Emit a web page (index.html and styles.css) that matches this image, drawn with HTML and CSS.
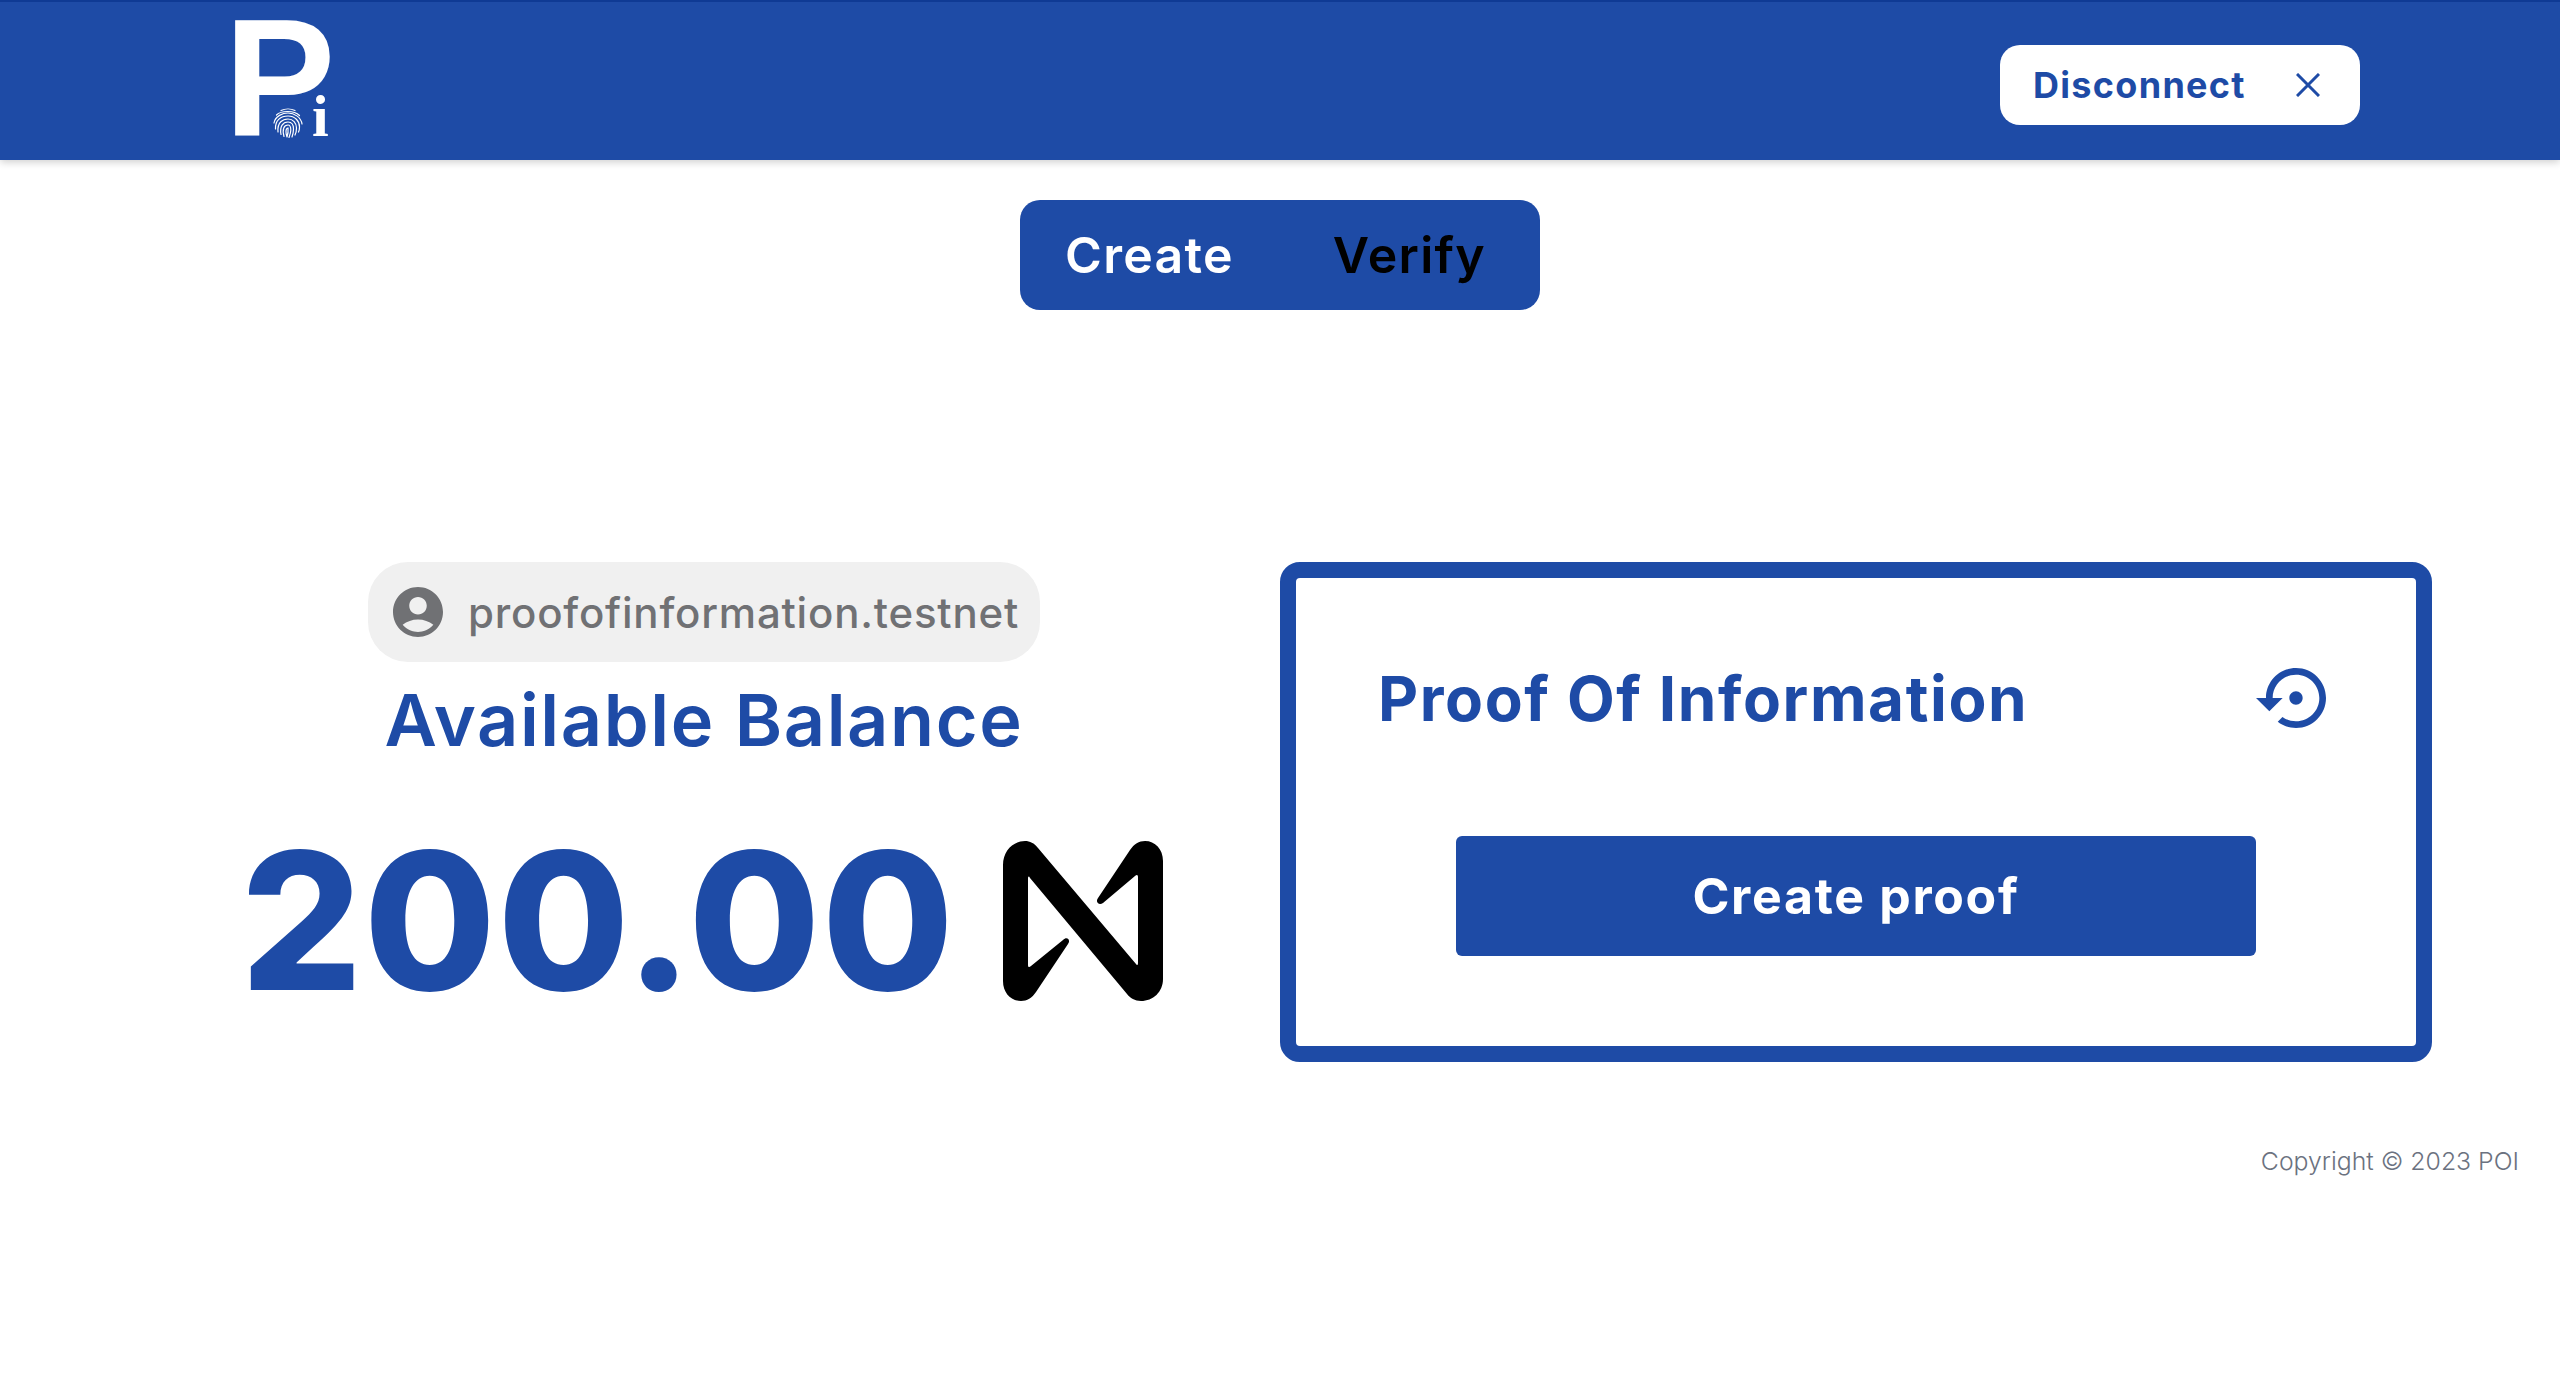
FILE: index.html
```html
<!DOCTYPE html>
<html lang="en">
<head>
    <meta charset="UTF-8">
    <title>Proof Of Information</title>
    <link rel="stylesheet" href="styles.css">
</head>
<body>
    <header class="topbar">
        <svg class="logo" viewBox="-12 0 116 140">
            <text class="logo-p" x="-10" y="126">P</text>
            <text class="logo-i" x="78" y="126">i</text>
            <g transform="translate(39 98)" fill="none" stroke="#fff" stroke-width="1.2" stroke-linecap="round">
                <path d="M8 2.500C12 .5 18 .5 22 2.500"/>
                <path d="M3.500 7C8 2.500 21 2 26.500 7.500"/>
                <path d="M1 15C2 8 10 5 15 5C21 5 28 9 29 16"/>
                <path d="M2.500 21C2 12 8 8 15 8C22 8 26.500 13 26.500 19C26.500 21 26 23 25.500 24"/>
                <path d="M5 24C4 14 10 11 15 11C20 11 23.500 15 23.500 20C23.500 23 23 25 22 27"/>
                <path d="M8 26.500C6.500 18 10 14 15 14C19 14 20.500 17 20.500 21C20.500 24 20 26 19 29"/>
                <path d="M11 28.500C9 21 11 17 15 17C17 17 17.800 19 17.800 22C17.800 25 17 27 16 29.500"/>
                <path d="M14 29C12.500 25 12.500 20 15 20C15.500 24 15 26 14 29"/>
            </g>
        </svg>
        <button class="disconnect">
            <span>Disconnect</span>
            <svg class="disconnect-x" viewBox="0 0 24 24" fill="none" stroke="#1e4ba6" stroke-width="3">
                <path d="M1 1L23 23M23 1L1 23"/>
            </svg>
        </button>
    </header>

    <div class="tabs">
        <a class="tab tab-active">Create</a>
        <a class="tab">Verify</a>
    </div>

    <main class="content">
        <section class="wallet">
            <div class="account">
                <svg class="account-icon" viewBox="0 0 24 24" fill="#707174">
                    <path d="M12 2C6.480 2 2 6.480 2 12s4.480 10 10 10 10-4.480 10-10S17.520 2 12 2zm0 4c1.930 0 3.500 1.570 3.500 3.500S13.930 13 12 13s-3.500-1.570-3.500-3.500S10.070 6 12 6zm0 14c-2.030 0-4.430-.82-6.140-2.880C7.550 15.800 9.680 15 12 15s4.450.8 6.140 2.120C16.430 19.180 14.030 20 12 20z"/>
                </svg>
                <span>proofofinformation.testnet</span>
            </div>
            <h2 class="balance-label">Available Balance</h2>
            <div class="balance">
                <span class="balance-value">200.00</span>
                <svg class="near-logo" viewBox="0 0 160 160" fill="#000">
                    <path d="M0 24C0 10 10 0 22 0C27 0 31 2 35 7L133 123C134 125 135 124 135 122V36C135 34 134 33 132 35L100 62C96 65 92 61 95 57L127 9C131 3 136 0 142 0C152 0 160 8 160 20V138C160 151 150 160 138 160C132 160 127 157 124 153L27 37C26 35 25 35 25 38V124C25 126 26 127 28 125L60 99C64 95 68 99 65 103L33 151C29 157 24 160 18 160C8 160 0 152 0 140Z"/>
                </svg>
            </div>
        </section>

        <section class="proof-card">
            <div class="proof-head">
                <h2 class="proof-title">Proof Of Information</h2>
                <svg class="restore-icon" viewBox="0 0 24 24" fill="#1e4ba6">
                    <path d="M14 12c0-1.100-.9-2-2-2s-2 .9-2 2 .9 2 2 2 2-.9 2-2zm-2-9c-4.970 0-9 4.030-9 9H0l4 4 4-4H5c0-3.870 3.130-7 7-7s7 3.130 7 7-3.130 7-7 7c-1.510 0-2.910-.49-4.060-1.300l-1.420 1.440C8.040 20.300 9.940 21 12 21c4.970 0 9-4.030 9-9s-4.030-9-9-9z"/>
                </svg>
            </div>
            <button class="create-proof">Create proof</button>
        </section>
    </main>

    <footer class="copyright">Copyright © 2023 POI</footer>
</body>
</html>
```

FILE: styles.css
```css
* { box-sizing: border-box; }
body { margin: 0; background: #fff; font-family: Inter, "Open Sans", sans-serif; color: #1e4ba6; }
h2 { margin: 0; }
button { font-family: inherit; border: none; cursor: pointer; }

.topbar { height: 160px; display: flex; justify-content: space-between; align-items: center; padding: 8px 200px 0 222px; background: #1e4ba6; border-top: 2px solid #0f3a94; box-shadow: 0 2px 8px #0003; }
.logo { width: 116px; height: 140px; align-self: flex-start; }
.logo-p { fill: #fff; font-family: "Liberation Sans", sans-serif; font-weight: 700; font-size: 167px; }
.logo-i { fill: #fff; font-family: "Liberation Serif", serif; font-weight: 700; font-size: 60px; }
.disconnect { width: 360px; height: 80px; display: flex; justify-content: space-between; align-items: center; padding: 0 40px 0 33px; background: #fff; border-radius: 20px; color: #1e4ba6; font-size: 36px; font-weight: 700; letter-spacing: 1.3px; }
.disconnect-x { width: 24px; height: 24px; }

.tabs { width: 520px; height: 110px; margin: 40px auto 0; display: flex; align-items: center; padding: 0 54px 0 45px; justify-content: space-between; background: #1e4ba6; border-radius: 20px; font-size: 50px; font-weight: 600; letter-spacing: 1.3px; }
.tab { color: #000; }
.tab-active { color: #fff; }

.content { display: grid; grid-template-columns: 1fr 1fr; padding: 0 128px; margin-top: 252px; }
.wallet { display: flex; flex-direction: column; align-items: center; }
.account { width: 672px; height: 100px; display: flex; align-items: center; gap: 20px; padding: 0 20px; background: #f0f0f0; border-radius: 40px; color: #707174; font-size: 42px; font-weight: 500; letter-spacing: 0.8px; white-space: nowrap; }
.account-icon { width: 60px; height: 60px; }
.balance-label { margin-top: 14px; font-size: 72px; line-height: 88px; font-weight: 600; letter-spacing: 1.6px; }
.balance { display: flex; align-items: center; gap: 47px; margin-top: 62px; }
.balance-value { font-size: 191px; line-height: 190px; font-weight: 800; letter-spacing: 1.5px; }
.near-logo { width: 160px; height: 160px; margin-right: 5px; }

.proof-card { height: 500px; border: 16px solid #1e4ba6; border-radius: 20px; padding: 80px 82px 0; }
.proof-head { display: flex; justify-content: space-between; align-items: center; height: 80px; }
.proof-title { font-size: 62px; font-weight: 700; letter-spacing: 1.6px; }
.restore-icon { width: 80px; height: 80px; margin-right: -2px; }
.create-proof { display: block; width: 800px; height: 120px; margin: 98px auto 0; background: #1e4ba6; color: #fff; border-radius: 6px; font-size: 50px; font-weight: 700; letter-spacing: 1.7px; }

.copyright { margin-top: 84px; padding-right: 41px; text-align: right; color: #6b7280; font-size: 24.8px; font-weight: 300; }
```
